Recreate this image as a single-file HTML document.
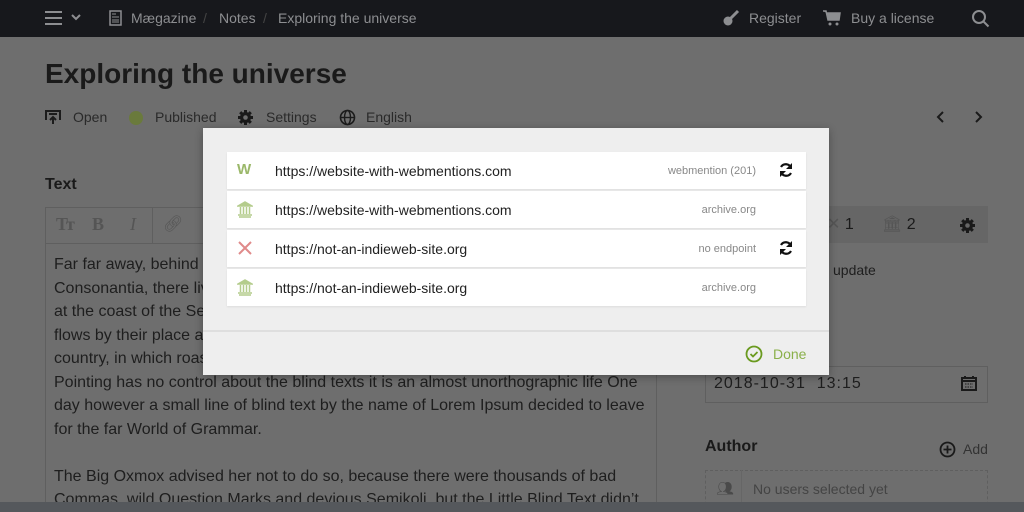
<!DOCTYPE html>
<html style="width:1024px;height:512px;overflow:hidden"><head><meta charset="utf-8"><style>
*{box-sizing:border-box;margin:0;padding:0}
body{width:1024px;height:512px;overflow:hidden;background:#6e6e6e;font-family:"Liberation Sans",Arial,sans-serif;position:relative;color:#1c1c1c}
.a{position:absolute;white-space:nowrap}
.top{left:0;top:0;width:1024px;height:37px;background:#17181c;color:#8d8e91;font-size:14px}
.top span{position:absolute;top:10px}
.bar{left:0;top:502px;width:1024px;height:10px;background:#55585c}
.modal{left:203px;top:128px;width:626px;height:247px;background:#eeeeee;box-shadow:0 2px 8px rgba(0,0,0,.3)}
.row{position:absolute;left:24px;width:579px;height:37px;background:#fff;box-shadow:0 1px 2px rgba(0,0,0,.08)}
.row .u{position:absolute;left:48px;top:11px;font-size:14px;color:#222}
.row .s{position:absolute;right:50px;top:13px;font-size:11px;color:#888}
.row .ic{position:absolute;left:10px;top:10px}
.row .rf{position:absolute;right:12px;top:10px}
.tx{left:54px;font-size:16px;color:#1e1e1e;line-height:23.5px;width:600px;overflow:hidden;height:249px}
</style></head><body>
<div class="a top">
<svg class="a" style="left:45px;top:11px" width="18" height="14"><path d="M0 1h17M0 7h17M0 13h17" stroke="#8d8e91" stroke-width="2"/></svg>
<svg class="a" style="left:71px;top:14px" width="10" height="7"><path d="M1 1l4 4 4-4" stroke="#8d8e91" stroke-width="2" fill="none"/></svg>
<svg class="a" style="left:109px;top:10px" width="13" height="16"><rect x="1" y="1" width="11" height="14" fill="none" stroke="#8d8e91" stroke-width="1.5"/><path d="M3 4h4M3 7h7M3 10h7M3 12h7" stroke="#8d8e91"/></svg>
<span style="left:131px">Mægazine</span><span style="left:203px;color:#444">/</span><span style="left:219px">Notes</span><span style="left:263px;color:#444">/</span><span style="left:278px">Exploring the universe</span>
<svg class="a" style="left:722px;top:9px" width="18" height="18"><circle cx="6" cy="12" r="4.5" fill="#8d8e91"/><path d="M8 10l8-8" stroke="#8d8e91" stroke-width="3"/></svg>
<span style="left:749px">Register</span>
<svg class="a" style="left:823px;top:9px" width="18" height="17"><path d="M0 2h3l2 9h11l1-7H4" fill="#8d8e91" stroke="#8d8e91" stroke-width="1.5"/><circle cx="7" cy="15" r="1.5" fill="#8d8e91"/><circle cx="14" cy="15" r="1.5" fill="#8d8e91"/></svg>
<span style="left:851px">Buy a license</span>
<svg class="a" style="left:971px;top:9px" width="19" height="19"><circle cx="8" cy="8" r="6" fill="none" stroke="#8d8e91" stroke-width="2"/><path d="M12.5 12.5l5 5" stroke="#8d8e91" stroke-width="2"/></svg>
</div>
<div class="a" style="left:45px;top:58px;font-size:28px;font-weight:bold;color:#1a1a1a">Exploring the universe</div>
<svg class="a" style="left:45px;top:110px" width="16" height="15"><path d="M1 10V1h14v9M4 4h8" stroke="#1c1c1c" stroke-width="2" fill="none"/><path d="M8 14V7M5 10l3-3 3 3" stroke="#1c1c1c" stroke-width="2" fill="none"/></svg>
<div class="a" style="left:73px;top:109px;font-size:14px;color:#2a2a2a">Open</div>
<div class="a" style="left:129px;top:111px;width:14px;height:14px;border-radius:50%;background:#6a7a3c"></div>
<div class="a" style="left:155px;top:109px;font-size:14px;color:#2a2a2a">Published</div>
<svg class="a" style="left:237px;top:109px" width="17" height="17" viewBox="0 0 17 17"><g fill="#1a1a1a"><circle cx="8.5" cy="8.5" r="5.5"/><g stroke="#1a1a1a" stroke-width="3"><path d="M8.5 1v15M1 8.5h15M3.2 3.2l10.6 10.6M13.8 3.2L3.2 13.8"/></g></g><circle cx="8.5" cy="8.5" r="2.3" fill="#6e6e6e"/></svg>
<div class="a" style="left:266px;top:109px;font-size:14px;color:#2a2a2a">Settings</div>
<svg class="a" style="left:339px;top:109px" width="17" height="17"><circle cx="8.5" cy="8.5" r="7" fill="none" stroke="#1c1c1c" stroke-width="1.6"/><ellipse cx="8.5" cy="8.5" rx="3" ry="7" fill="none" stroke="#1c1c1c" stroke-width="1.4"/><path d="M1.5 8.5h14" stroke="#1c1c1c" stroke-width="1.4"/></svg>
<div class="a" style="left:366px;top:109px;font-size:14px;color:#2a2a2a">English</div>
<svg class="a" style="left:936px;top:111px" width="50" height="12"><path d="M7 1L2 6l5 5M40 1l5 5-5 5" stroke="#1a1a1a" stroke-width="2" fill="none"/></svg>
<div class="a" style="left:45px;top:176px;font-size:16px;font-weight:bold;color:#1a1a1a">Text</div>
<div class="a" style="left:45px;top:207px;width:612px;height:310px;border:1px solid #5f5f5f"></div>
<div class="a" style="left:46px;top:243px;width:610px;height:1px;background:#5f5f5f"></div>
<div class="a" style="left:56px;top:214px;font-size:18px;color:#555;font-family:'Liberation Serif',serif;font-weight:bold;letter-spacing:-2px">Tт</div>
<div class="a" style="left:92px;top:214px;font-size:18px;color:#555;font-family:'Liberation Serif',serif;font-weight:bold">B</div>
<div class="a" style="left:130px;top:214px;font-size:18px;color:#555;font-family:'Liberation Serif',serif;font-style:italic">I</div>
<div class="a" style="left:152px;top:208px;width:1px;height:35px;background:#5f5f5f"></div>
<div class="a" style="left:163px;top:214px;font-size:16px;color:#555">🔗︎</div>
<div class="a tx" style="top:253px">Far far away, behind the word mountains, far from the countries Vokalia and<br>Consonantia, there live the blind texts. Separated they live in Bookmarksgrove right<br>at the coast of the Semantics, a large language ocean. A small river named Duden<br>flows by their place and supplies it with the necessary regelialia. It is a paradisematic<br>country, in which roasted parts of sentences fly into your mouth. Even the all<br>Pointing has no control about the blind texts it is an almost unorthographic life One<br>day however a small line of blind text by the name of Lorem Ipsum decided to leave<br>for the far World of Grammar.<br><br>The Big Oxmox advised her not to do so, because there were thousands of bad<br>Commas, wild Question Marks and devious Semikoli, but the Little Blind Text didn’t</div>
<div class="a" style="left:705px;top:206px;width:283px;height:37px;background:#666"></div>
<div class="a" style="left:827px;top:214px;font-size:16px;color:#555">✕ <span style="color:#1a1a1a">1</span></div>
<div class="a" style="left:882px;top:214px;font-size:16px;color:#555">🏛︎ <span style="color:#1a1a1a">2</span></div>
<svg class="a" style="left:959px;top:217px" width="17" height="17" viewBox="0 0 17 17"><g fill="#1a1a1a"><circle cx="8.5" cy="8.5" r="5.5"/><g stroke="#1a1a1a" stroke-width="3"><path d="M8.5 1v15M1 8.5h15M3.2 3.2l10.6 10.6M13.8 3.2L3.2 13.8"/></g></g><circle cx="8.5" cy="8.5" r="2.3" fill="#666"/></svg>
<div class="a" style="left:833px;top:262px;font-size:14px;color:#1e1e1e">update</div>
<div class="a" style="left:705px;top:366px;width:283px;height:37px;border:1px solid #5f5f5f"></div>
<div class="a" style="left:714px;top:375px;font-size:16px;color:#1e1e1e;letter-spacing:1px">2018-10-31 &nbsp;13:15</div>
<svg class="a" style="left:961px;top:375px" width="16" height="16"><rect x="1" y="3" width="14" height="12" fill="none" stroke="#1a1a1a" stroke-width="2"/><path d="M1 6h14M4 1v3M12 1v3" stroke="#1a1a1a" stroke-width="2"/><path d="M4 9h8M4 12h8" stroke="#1a1a1a" stroke-dasharray="1.5 1"/></svg>
<div class="a" style="left:705px;top:438px;font-size:16px;font-weight:bold;color:#1a1a1a">Author</div>
<svg class="a" style="left:939px;top:441px" width="17" height="17"><circle cx="8.5" cy="8.5" r="7" fill="none" stroke="#1a1a1a" stroke-width="1.8"/><path d="M8.5 4.5v8M4.5 8.5h8" stroke="#1a1a1a" stroke-width="1.8"/></svg>
<div class="a" style="left:963px;top:441px;font-size:14px;color:#333">Add</div>
<div class="a" style="left:705px;top:470px;width:283px;height:40px;border:1px dashed #5f5f5f"></div>
<div class="a" style="left:741px;top:470px;width:1px;height:34px;background:#666"></div>
<div class="a" style="left:716px;top:480px;font-size:14px;color:#4a4a4a">👥︎</div>
<div class="a" style="left:753px;top:481px;font-size:14px;color:#444">No users selected yet</div>
<div class="a bar"></div>
<div class="a modal">
<div class="row" style="top:24px"><div class="ic" style="font-weight:bold;color:#9bb86a;font-size:15px;top:9px">W</div><div class="u">https://website-with-webmentions.com</div><div class="s">webmention (201)</div>
<svg class="rf" width="16" height="16"><path d="M13 6A5.5 5.5 0 0 0 3 5M3 10a5.5 5.5 0 0 0 10 1" stroke="#111" stroke-width="2.2" fill="none"/><path d="M14 1v6H8zM2 15V9h6z" fill="#111"/></svg></div>
<div class="row" style="top:63px"><svg class="ic" width="16" height="17"><path d="M1 5L8 1l7 4zM2 16h12M1 14h14" stroke="#b4cc8c" stroke-width="1.5" fill="#b4cc8c"/><path d="M3.5 6v7M6.5 6v7M9.5 6v7M12.5 6v7" stroke="#b4cc8c" stroke-width="1.5"/></svg><div class="u">https://website-with-webmentions.com</div><div class="s">archive.org</div></div>
<div class="row" style="top:102px"><svg class="ic" width="16" height="16"><path d="M2 2l12 12M14 2L2 14" stroke="#e08a8a" stroke-width="2"/></svg><div class="u">https://not-an-indieweb-site.org</div><div class="s">no endpoint</div>
<svg class="rf" width="16" height="16"><path d="M13 6A5.5 5.5 0 0 0 3 5M3 10a5.5 5.5 0 0 0 10 1" stroke="#111" stroke-width="2.2" fill="none"/><path d="M14 1v6H8zM2 15V9h6z" fill="#111"/></svg></div>
<div class="row" style="top:141px"><svg class="ic" width="16" height="17"><path d="M1 5L8 1l7 4zM2 16h12M1 14h14" stroke="#b4cc8c" stroke-width="1.5" fill="#b4cc8c"/><path d="M3.5 6v7M6.5 6v7M9.5 6v7M12.5 6v7" stroke="#b4cc8c" stroke-width="1.5"/></svg><div class="u">https://not-an-indieweb-site.org</div><div class="s">archive.org</div></div>
<div class="a" style="left:0;top:202px;width:626px;height:2px;background:#dedede"></div>
<svg class="a" style="left:542px;top:217px" width="18" height="18"><circle cx="9" cy="9" r="7.5" fill="none" stroke="#6a9a1f" stroke-width="1.8"/><path d="M5.5 9l2.5 2.5 4.5-4.5" stroke="#6a9a1f" stroke-width="1.8" fill="none"/></svg>
<div class="a" style="left:570px;top:218px;font-size:14px;color:#8ab04a">Done</div>
</div>
</body></html>
